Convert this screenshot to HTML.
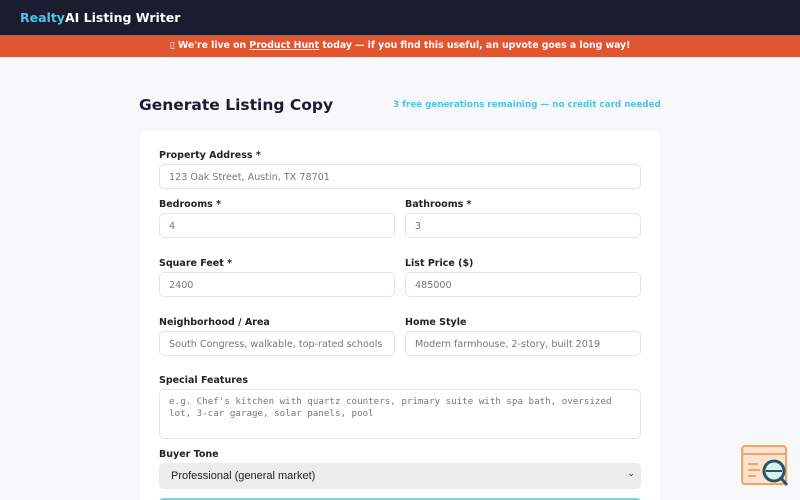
<!DOCTYPE html>
<html><head><style>
*{box-sizing:border-box;margin:0;padding:0}
html,body{width:800px;height:500px;overflow:hidden}
body{background:#f6f8fa;font-family:"DejaVu Sans","Liberation Sans",sans-serif;position:relative}
.hdr{position:absolute;left:0;top:0;width:800px;height:35px;background:#1a1d2f;color:#fff;font-weight:bold;font-size:12.5px;padding:10px 0 0 20px}
.hdr span{color:#4fc3e8}
.ban{position:absolute;left:0;top:35px;width:800px;height:22px;background:#e05532;color:#fff;font-weight:bold;font-size:9.3px;text-align:center;line-height:22px}
.ban u{text-decoration:underline}
h1{position:absolute;left:139px;top:96px;font-size:15.5px;color:#1a1d2f}
.sub{position:absolute;left:393px;top:100px;font-size:8.75px;font-weight:bold;color:#4fc3e8}
.card{position:absolute;left:140px;top:131px;width:520px;height:369px;background:#fff;border-radius:8px 8px 0 0}
.l{position:absolute;font-size:9.5px;font-weight:bold;color:#222}
.i{position:absolute;height:25px;border:1px solid #e2e5ea;border-radius:5px;font-size:9.6px;color:#777;padding:7px 9px;white-space:nowrap;background:#fff}
.ta{font-family:"DejaVu Sans Mono","Liberation Mono",monospace;font-size:9.2px;height:50px;white-space:normal;padding:6px 9px;line-height:12px}
.sel{background:#ececec;border:none;color:#222;font-family:"Liberation Sans",sans-serif;font-size:11px;padding:7px 12px;height:26px}
</style></head><body>
<div class="hdr"><span>Realty</span>AI Listing Writer</div>
<div class="ban">▯ We're live on <u>Product Hunt</u> today — if you find this useful, an upvote goes a long way!</div>
<h1>Generate Listing Copy</h1>
<div class="sub">3 free generations remaining — no credit card needed</div>
<div class="card"></div>
<div class="l" style="left:159px;top:150px">Property Address *</div>
<div class="i" style="left:159px;top:164px;width:482px">123 Oak Street, Austin, TX 78701</div>
<div class="l" style="left:159px;top:199px">Bedrooms *</div>
<div class="i" style="left:159px;top:213px;width:236px">4</div>
<div class="l" style="left:405px;top:199px">Bathrooms *</div>
<div class="i" style="left:405px;top:213px;width:236px">3</div>
<div class="l" style="left:159px;top:258px">Square Feet *</div>
<div class="i" style="left:159px;top:272px;width:236px">2400</div>
<div class="l" style="left:405px;top:258px">List Price ($)</div>
<div class="i" style="left:405px;top:272px;width:236px">485000</div>
<div class="l" style="left:159px;top:317px">Neighborhood / Area</div>
<div class="i" style="left:159px;top:331px;width:236px">South Congress, walkable, top-rated schools</div>
<div class="l" style="left:405px;top:317px">Home Style</div>
<div class="i" style="left:405px;top:331px;width:236px">Modern farmhouse, 2-story, built 2019</div>
<div class="l" style="left:159px;top:375px">Special Features</div>
<div class="i ta" style="left:159px;top:389px;width:482px">e.g. Chef's kitchen with quartz counters, primary suite with spa bath, oversized lot, 3-car garage, solar panels, pool</div>
<div class="l" style="left:159px;top:449px">Buyer Tone</div>
<div class="i sel" style="left:159px;top:463px;width:482px">Professional (general market)<span style="position:absolute;right:6px;top:5px;font-size:9px">⌄</span></div>
<div style="position:absolute;left:159px;top:498px;width:482px;height:4px;background:#7fd3e3;border-radius:4px 4px 0 0"></div>
<svg style="position:absolute;left:740px;top:444px" width="52" height="46" viewBox="0 0 52 46">
<rect x="2" y="2" width="44" height="38" rx="3" fill="#fde3cf" stroke="#f0a46a" stroke-width="2"/>
<line x1="2" y1="10" x2="46" y2="10" stroke="#f0a46a" stroke-width="2"/>
<path d="M8 20h10M8 26h12M8 32h8" stroke="#f0a46a" stroke-width="2"/>
<circle cx="34" cy="27" r="10" fill="#d8eef0" stroke="#2a5560" stroke-width="3"/>
<line x1="41" y1="34" x2="47" y2="41" stroke="#2a5560" stroke-width="3"/>
<line x1="26" y1="27" x2="42" y2="27" stroke="#2a5560" stroke-width="2"/>
</svg>
</body></html>
